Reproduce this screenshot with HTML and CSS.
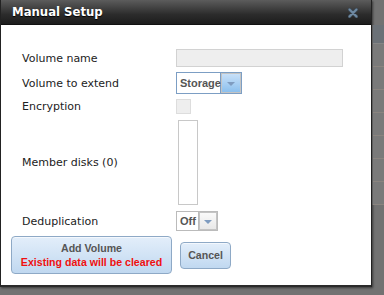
FILE: index.html
```html
<!DOCTYPE html>
<html>
<head>
    <title>Manual Setup</title>
    <meta name="viewport" content="width=device-width, initial-scale=1.0">
    <link rel="stylesheet" href="styles.css">
</head>
<body>
    <div class="page">
        <div class="dialog">
            <div class="dialog-title">
                <span>Manual Setup</span>
                <svg class="close-icon" width="10" height="10" viewBox="0 0 10 10">
                    <path d="M1.5 1.5 L8.5 8.5 M8.5 1.5 L1.5 8.5" stroke="#3c4954" stroke-width="3.6" stroke-linecap="round"/>
                    <path d="M1.5 1.5 L8.5 8.5 M8.5 1.5 L1.5 8.5" stroke="#6f8aa3" stroke-width="2" stroke-linecap="round"/>
                </svg>
            </div>
            <div class="dialog-body">
                <form class="form-grid">
                    <label class="field-label">Volume name</label>
                    <div><input class="text-input" type="text"></div>

                    <label class="field-label">Volume to extend</label>
                    <div class="combo combo-active">
                        <span class="combo-value">Storage</span>
                        <span class="combo-arrow"><span class="tri"></span></span>
                    </div>

                    <label class="field-label">Encryption</label>
                    <div><span class="checkbox"></span></div>

                    <label class="field-label">Member disks (0)</label>
                    <div><div class="disk-list"></div></div>

                    <label class="field-label">Deduplication</label>
                    <div class="combo">
                        <span class="combo-value">Off</span>
                        <span class="combo-arrow plain"><span class="tri"></span></span>
                    </div>
                </form>
                <div class="actions">
                    <button class="button button-main" type="button">Add Volume<br><span class="warn">Existing data will be cleared</span></button>
                    <button class="button button-cancel" type="button">Cancel</button>
                </div>
            </div>
        </div>
        <div class="backdrop-table">
            <div class="bt-head"></div>
            <div class="bt-row"></div>
            <div class="bt-row"></div>
            <div class="bt-row"></div>
            <div class="bt-row"></div>
            <div class="bt-row"></div>
            <div class="bt-row"></div>
            <div class="bt-row"></div>
        </div>
    </div>
</body>
</html>
```
FILE: styles.css
```css
        body {
            margin: 0;
            background-color: #727272;
            font-family: "DejaVu Sans", Verdana, sans-serif;
            font-size: 11px;
            color: #222;
            overflow: hidden;
        }

        .page {
            display: flex;
            align-items: flex-start;
            height: 295px;
        }

        .dialog {
            width: 370px;
            flex-shrink: 0;
            background-color: #fff;
            border: 1px solid #222;
            border-top: none;
            border-bottom: 2px solid #2a2a2a;
            box-shadow: 1px 1px 2px rgba(0, 0, 0, 0.5);
        }

        .dialog-title {
            height: 24px;
            display: flex;
            align-items: center;
            justify-content: space-between;
            padding: 0 13px 0 11px;
            background: linear-gradient(#5c5c5c, #2c2c2c 60%, #1c1c1c);
            border-bottom: 1px solid #111;
            color: #fff;
            font-weight: bold;
            font-size: 11.7px;
            text-shadow: 0 1px 1px #000;
        }

        .close-icon {
            margin-top: 1px;
        }

        .dialog-body {
            padding: 24px 0 11px 0;
        }

        .form-grid {
            display: grid;
            grid-template-columns: 154px auto;
            align-items: center;
            row-gap: 5px;
            padding-left: 21px;
            margin: 0;
        }

        .field-label {
            font-size: 11px;
        }

        .text-input {
            display: block;
            width: 165px;
            height: 16px;
            margin: 0;
            padding: 0;
            border: 1px solid #d2d2d2;
            background-color: #eee;
        }

        .combo {
            display: inline-flex;
            width: max-content;
            border: 1px solid #bbb;
            background-color: #fff;
        }

        .combo-active {
            border-color: #7c9ec4;
        }

        .combo-value {
            width: 40px;
            padding: 0 0 0 3px;
            font-family: "Liberation Sans", Arial, sans-serif;
            font-size: 11px;
            font-weight: bold;
            color: #555;
            display: flex;
            align-items: center;
            border-right: 1px solid #bbb;
        }

        .combo-active .combo-value {
            border-right-color: #7c9ec4;
        }

        .combo:not(.combo-active) .combo-value {
            width: 18px;
        }

        .combo-arrow {
            width: 18px;
            height: 18px;
            border: 1px solid #c4c4c4;
            display: flex;
            align-items: center;
            justify-content: center;
            background: linear-gradient(#c8e0f8, #8cc0ee);
        }

        .combo-arrow.plain {
            width: 16px;
            height: 16px;
            background: linear-gradient(#fafafa, #e8e8e8);
        }

        .tri {
            width: 0;
            height: 0;
            border-left: 4px solid transparent;
            border-right: 4px solid transparent;
            border-top: 4px solid #7f9cc0;
            margin-top: 1px;
        }

        .checkbox {
            display: block;
            width: 13px;
            height: 13px;
            border: 1px solid #ddd;
            background-color: #eee;
        }

        .disk-list {
            width: 18px;
            height: 83px;
            margin: 1px 0 1px 2px;
            border: 1px solid #c8c8c8;
            background-color: #fff;
        }

        .actions {
            display: flex;
            align-items: center;
            gap: 8px;
            padding: 5px 0 0 10px;
        }

        .button {
            font-family: "Liberation Sans", Arial, sans-serif;
            font-weight: bold;
            font-size: 10.6px;
            color: #555;
            border: 1px solid #8ea9c6;
            border-radius: 4px;
            background: linear-gradient(#e3eefa, #c0d8f0);
            box-shadow: inset 0 1px 0 #f4f8fd;
            cursor: pointer;
            margin: 0;
            white-space: nowrap;
        }

        .button-main {
            width: 161px;
            height: 38px;
            line-height: 14px;
            padding: 0;
        }

        .warn {
            color: #f01010;
        }

        .button-cancel {
            width: 51px;
            height: 27px;
            padding: 0;
        }

        .backdrop-table {
            flex: 1;
            margin-top: 25px;
            background-color: #7a7a7a;
            border-left: 1px solid #5e5e5e;
        }

        .bt-head {
            height: 18px;
            background-color: #6b7177;
            border-bottom: 1px solid #858585;
        }

        .bt-row {
            height: 22px;
            border-bottom: 1px solid #8a847f;
        }
```
